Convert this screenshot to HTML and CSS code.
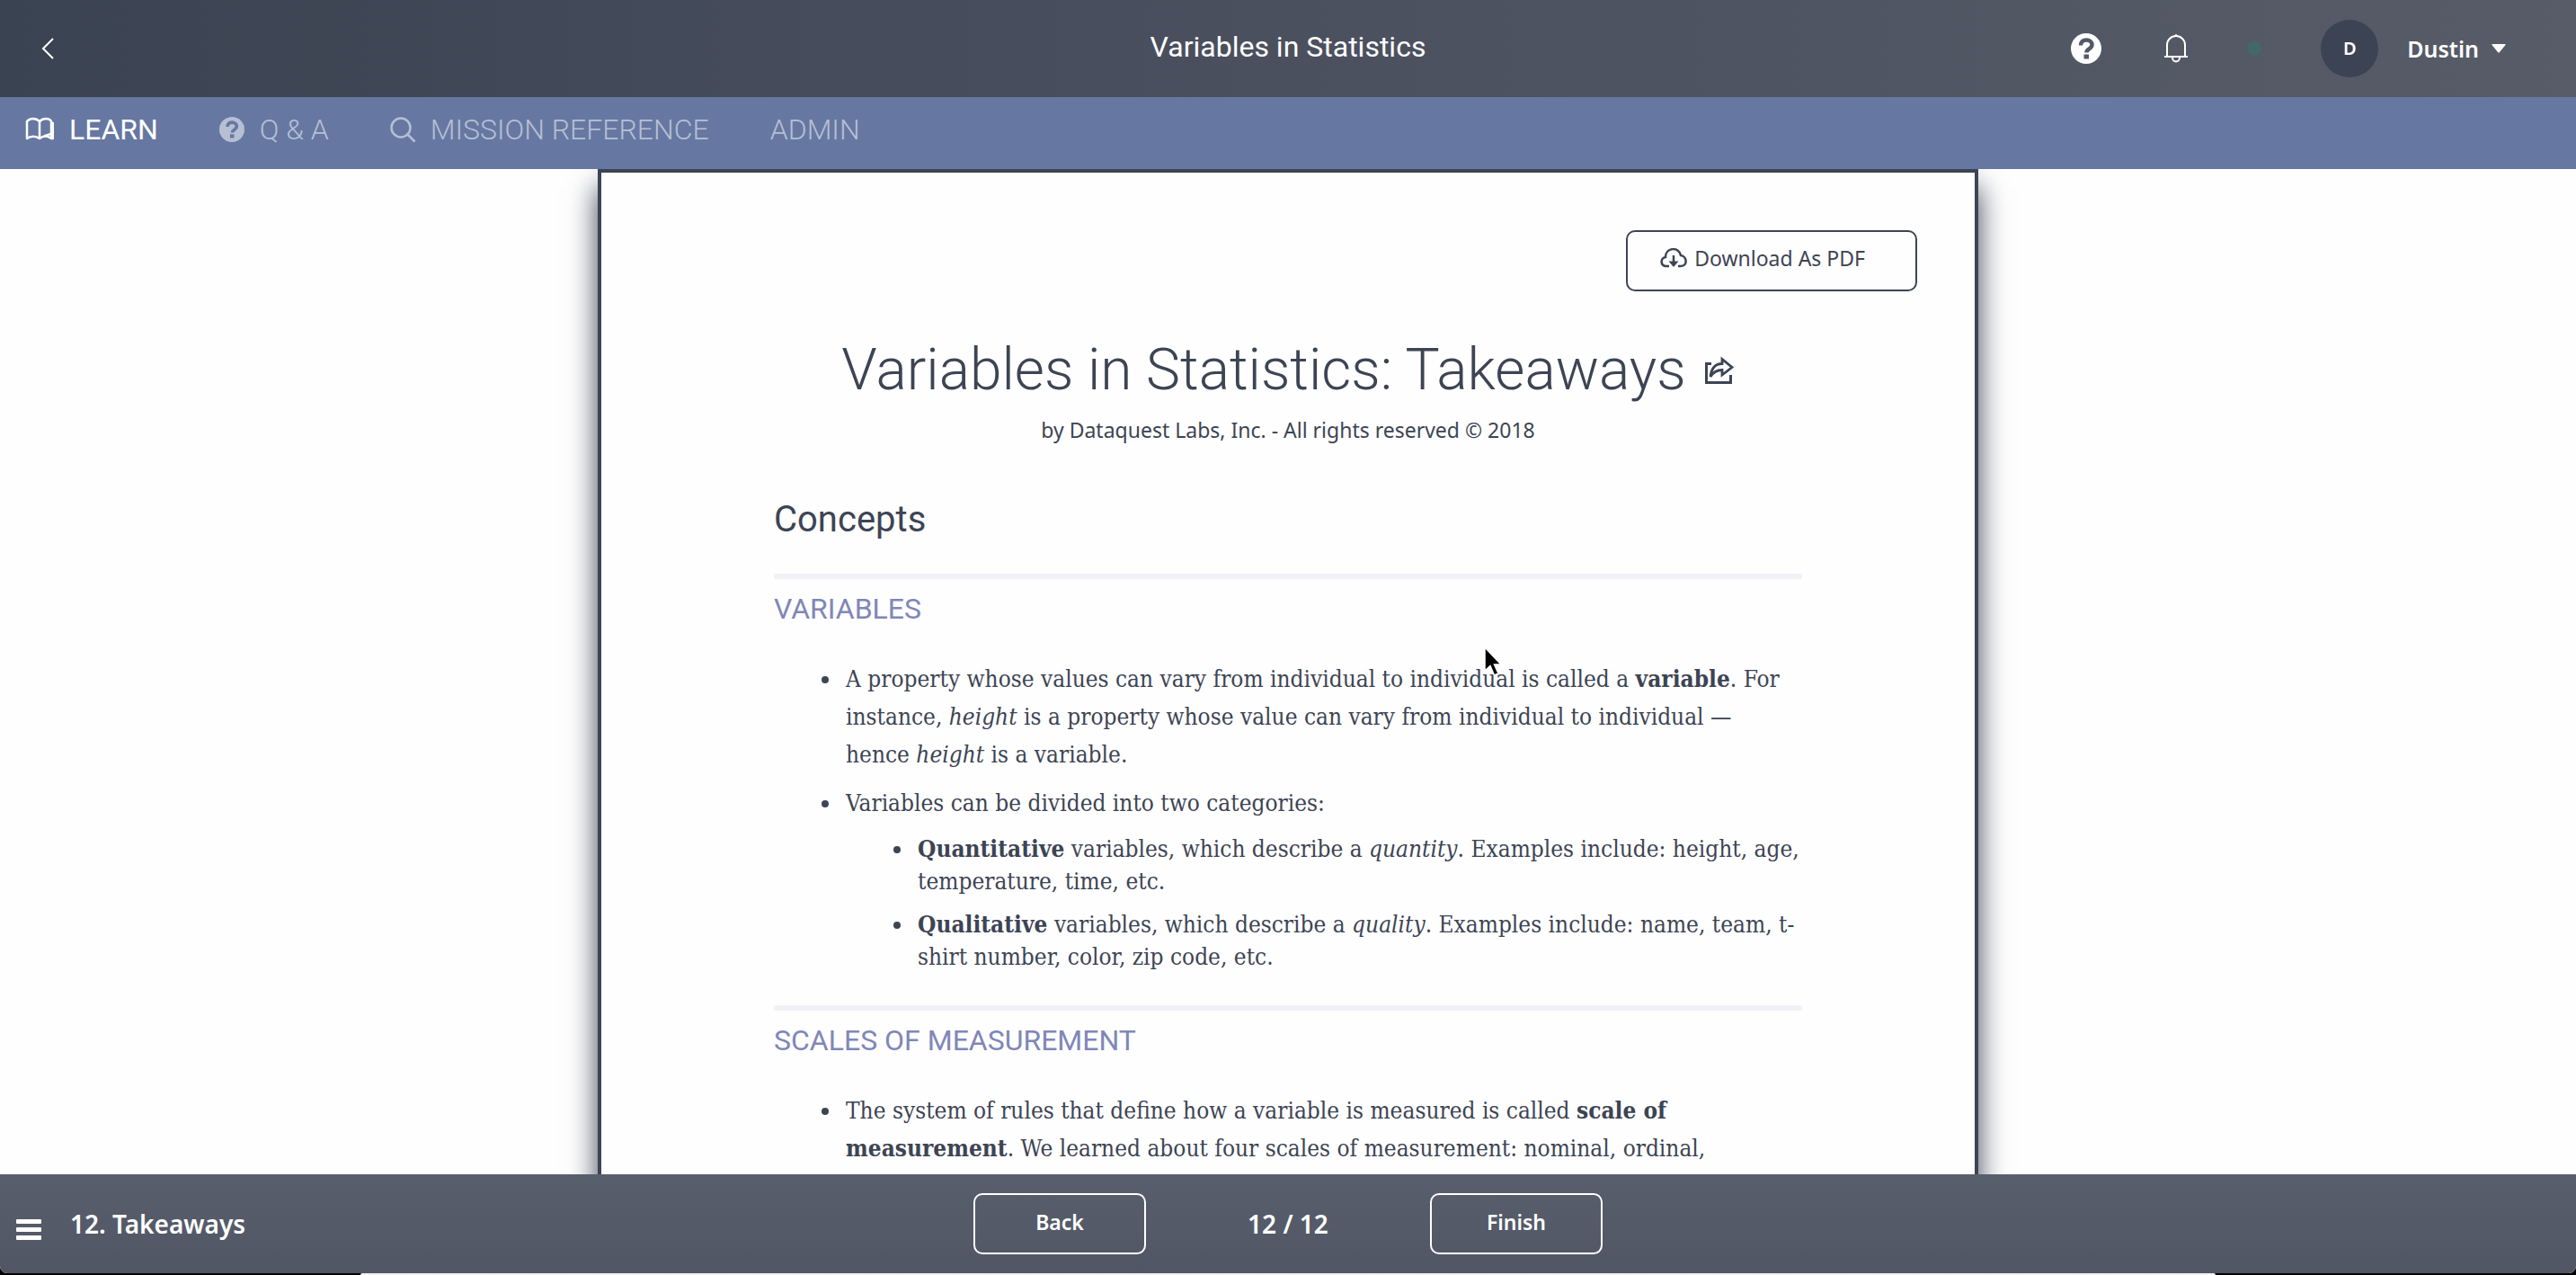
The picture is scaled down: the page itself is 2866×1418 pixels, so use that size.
FILE: index.html
```html
<!DOCTYPE html>
<html lang="en">
<head>
    <meta charset="UTF-8">
    <meta name="viewport" content="width=device-width, initial-scale=1.0">
    <title>Variables in Statistics</title>
    <link rel="stylesheet" href="styles.css">
</head>
<body>

    <div class="app">
        <header class="topbar">
            <button class="icon-btn back-link" aria-label="Go back">
                <svg width="14" height="24" viewBox="0 0 14 24" fill="none" stroke="currentColor" stroke-width="2"><path d="M13 1L2 12l11 11"/></svg>
            </button>
            <h1 class="topbar-title">Variables in Statistics</h1>
            <div class="topbar-tools">
                <button class="icon-btn" aria-label="Help">
                    <svg width="34" height="34" viewBox="0 0 34 34"><circle cx="17" cy="17" r="17" fill="currentColor"/><path d="M11 13.500c0-4 2.700-6 6.200-6 3.600 0 6.300 2 6.300 5.300 0 4.700-6.100 4.200-6.100 8.600" fill="none" stroke="#535966" stroke-width="4.500"/><rect x="14.500" y="23.500" width="5.500" height="5" fill="#535966"/></svg>
                </button>
                <button class="icon-btn bell" aria-label="Notifications">
                    <svg width="26" height="32" viewBox="0 0 26 32" fill="none" stroke="currentColor" stroke-width="2"><path d="M3 25V12a10 10 0 0 1 20 0v13M0 25h26M9 26c0 6 8 6 8 0"/><circle cx="13" cy="1.500" r="1" fill="currentColor" stroke-width="1"/></svg>
                </button>
                <span class="status-dot"></span>
                <span class="avatar">D</span>
                <button class="user-menu">Dustin
                    <svg width="16" height="10" viewBox="0 0 16 10"><path d="M1 0h14q1 0 .5 1L9 9q-1 1-2 0L.5 1Q0 0 1 0z" fill="currentColor"/></svg>
                </button>
            </div>
        </header>

        <nav class="tabs">
            <a href="#learn" class="tab active">
                <svg width="32" height="28" viewBox="0 0 32 28" fill="none" stroke="currentColor" stroke-width="2.500" stroke-linejoin="round"><path d="M16 5C12 1 5 1 2 5v19c4-3 10-3 14 0 4-3 9-3 13 0V5C27 1 20 1 16 5v19M20 22c3-2 6-2 8-3M29 6l2 1v17h-2"/></svg>
                LEARN
            </a>
            <a href="#qa" class="tab">
                <svg width="28" height="28" viewBox="0 0 34 34"><circle cx="17" cy="17" r="17" fill="currentColor"/><path d="M11 13.500c0-4 2.700-6 6.200-6 3.600 0 6.300 2 6.300 5.300 0 4.700-6.100 4.200-6.100 8.600" fill="none" stroke="#6678a2" stroke-width="4.500"/><rect x="14.500" y="23.500" width="5.500" height="5" fill="#6678a2"/></svg>
                Q &amp; A
            </a>
            <a href="#reference" class="tab">
                <svg width="28" height="28" viewBox="0 0 28 28" fill="none" stroke="currentColor" stroke-width="2.500" stroke-linecap="round"><circle cx="12" cy="12" r="10.500"/><path d="M19.500 19.500L27 27"/></svg>
                MISSION REFERENCE
            </a>
            <a href="#admin" class="tab">ADMIN</a>
        </nav>

        <main class="content">
            <article class="sheet">
                <button class="download">
                    <svg width="30" height="22" viewBox="0 0 30 22" fill="none" stroke="currentColor" stroke-width="2.500"><path d="M10 20H7C0 20 0 11 6 10 6-1 21-2 23 8c7 1 8 12 0 12h-3M15 8v10"/><path d="M9.500 14.500h11L15 21z" fill="currentColor" stroke="none"/></svg>
                    Download As PDF
                </button>

                <h2 class="sheet-title">
                    Variables in Statistics: Takeaways
                    <a href="#share" aria-label="Share"><svg width="34" height="32" viewBox="0 0 34 32" fill="none" stroke="currentColor" stroke-width="3"><path d="M8 8.500H2.500v21h27V21"/><path d="M7 23C8 14 12 8.500 20 8.500V3.500L31 12.500 20 21v-5.500C14 15.500 10 18 7 23z" stroke-width="2.800"/></svg></a>
                </h2>
                <p class="byline">by Dataquest Labs, Inc. - All rights reserved © 2018</p>

                <h3 class="section-title">Concepts</h3>

                <section class="topic">
                    <h4>VARIABLES</h4>
                    <ul>
                        <li>A property whose values can vary from individual to individual is called a <strong>variable</strong>. For instance, <em>height</em> is a property whose value can vary from individual to individual —<br>hence <em>height</em> is a variable.</li>
                        <li>Variables can be divided into two categories:
                            <ul>
                                <li><strong>Quantitative</strong> variables, which describe a <em>quantity</em>. Examples include: height, age, temperature, time, etc.</li>
                                <li><strong>Qualitative</strong> variables, which describe a <em>quality</em>. Examples include: name, team, t-<wbr>shirt number, color, zip code, etc.</li>
                            </ul>
                        </li>
                    </ul>
                </section>

                <section class="topic">
                    <h4>SCALES OF MEASUREMENT</h4>
                    <ul>
                        <li>The system of rules that define how a variable is measured is called <strong>scale of measurement</strong>. We learned about four scales of measurement: nominal, ordinal,</li>
                    </ul>
                </section>
            </article>
        </main>

        <footer class="bottombar">
            <div class="current-screen">
                <button class="icon-btn" aria-label="Open menu">
                    <svg width="28" height="24" viewBox="0 0 28 24" fill="currentColor"><rect width="28" height="5" rx="1"/><rect y="9" width="28" height="5" rx="1"/><rect y="18" width="28" height="5" rx="1"/></svg>
                </button>
                12. Takeaways
            </div>
            <div class="pager">
                <button>Back</button>
                <span>12 / 12</span>
                <button>Finish</button>
            </div>
        </footer>
    </div>

    <div class="dock"></div>

    <svg class="cursor" width="22" height="34" viewBox="0 0 22 34"><path d="M1 1v26l6-5.500 4.500 10.500 4.500-2-4.500-10H19z" fill="#000" stroke="#fff" stroke-width="1.500"/></svg>

</body>
</html>
```
FILE: styles.css
```css
* {
    box-sizing: border-box;
}
body {
    display: flex;
    flex-direction: column;
    height: 100vh;
    margin: 0;
    overflow: hidden;
    background: #000;
    color: #3d4454;
    font-family: "Noto Sans", sans-serif;
}
h1, h2, h3, h4, p, ul {
    margin: 0;
    padding: 0;
    font-weight: normal;
}
a {
    color: inherit;
    text-decoration: none;
}
button {
    padding: 0;
    border: none;
    background: none;
    color: inherit;
    font: inherit;
    cursor: pointer;
}
svg {
    display: block;
}
.app {
    display: flex;
    flex: 1;
    flex-direction: column;
    min-height: 0;
    overflow: hidden;
    border-radius: 0 0 8px 8px;
    background: #fefefe;
}

/* top bar */
.topbar {
    display: grid;
    grid-template-columns: 1fr auto 1fr;
    align-items: center;
    height: 108px;
    flex: none;
    padding: 0 78px 0 46px;
    background: linear-gradient(to right, #3a4351, #4b505f 50%, #575c68);
    color: #fff;
}
.back-link {
    justify-self: start;
}
.topbar-title {
    padding: 0 0 4px 32px;
    font-family: Roboto, sans-serif;
    font-size: 32px;
    line-height: 40px;
}
.topbar-tools {
    display: flex;
    align-items: center;
    justify-content: flex-end;
}
.bell {
    margin: 0 66px 0 70px;
}
.status-dot {
    width: 16px;
    height: 16px;
    border-radius: 50%;
    background: #42686a;
}
.avatar {
    width: 64px;
    height: 64px;
    margin: 0 32px 0 66px;
    border-radius: 50%;
    background: #3c4354;
    font-size: 20px;
    font-weight: 600;
    line-height: 64px;
    text-align: center;
}
.user-menu {
    display: flex;
    align-items: center;
    gap: 14px;
    font-size: 25px;
    font-weight: 600;
}

/* tabs */
.tabs {
    display: flex;
    flex: none;
    gap: 68px;
    height: 80px;
    padding: 0 28px 8px;
    background: #6678a2;
    color: #b6bfd3;
    font-family: Roboto, sans-serif;
    font-size: 32px;
    font-weight: 300;
}
.tab {
    display: flex;
    align-items: center;
    gap: 17px;
}
.tab.active {
    color: #fff;
    font-weight: 400;
}

/* sheet */
.content {
    display: flex;
    flex: 1;
    justify-content: center;
    min-height: 0;
    overflow: hidden;
}
.sheet {
    width: 1536px;
    height: max-content;
    min-height: calc(100% + 40px);
    padding: 64px 192px 0;
    border: 4px solid #3d4454;
    background: #fefefe;
    box-shadow: 0 20px 30px #3d4454;
}
.download {
    display: flex;
    align-items: center;
    gap: 8px;
    height: 68px;
    margin: 0 -128px 0 auto;
    padding: 0 56px 6px 36px;
    border: 2px solid #3d4454;
    border-radius: 10px;
    font-size: 23px;
}
.sheet-title {
    display: flex;
    align-items: center;
    justify-content: center;
    gap: 20px;
    margin: 48px -40px 0;
    font-family: Roboto, sans-serif;
    font-size: 64px;
    font-weight: 300;
    line-height: 80px;
    white-space: nowrap;
}
.byline {
    margin-top: 8px;
    font-size: 23px;
    line-height: 36px;
    text-align: center;
}
.section-title {
    margin: 56px 0 34px;
    font-family: Roboto, sans-serif;
    font-size: 40px;
    line-height: 52px;
}
.topic {
    margin-bottom: 36px;
    border-top: 6px solid #f1f2f8;
    font-family: "DejaVu Serif Condensed", "DejaVu Serif", serif;
    font-size: 26px;
    line-height: 42px;
}
.topic h4 {
    margin: 12px 0 36px;
    color: #8087b8;
    font-family: Roboto, sans-serif;
    font-size: 32px;
    line-height: 42px;
}
.topic ul {
    padding-left: 76px;
    list-style: disc;
}
.topic li {
    margin-bottom: 12px;
    padding-left: 4px;
}
.topic ul ul {
    margin-top: 12px;
    line-height: 36px;
}

/* bottom bar */
.bottombar {
    display: grid;
    grid-template-columns: 1fr 700px 1fr;
    flex: none;
    align-items: center;
    height: 110px;
    padding: 0 18px;
    background: linear-gradient(#585f6c, #515665);
    color: #fff;
    font-size: 28px;
    font-weight: 600;
}
.current-screen {
    display: flex;
    align-items: flex-end;
    gap: 32px;
}
.pager {
    display: flex;
    align-items: center;
    justify-content: space-between;
}
.pager button {
    width: 192px;
    height: 68px;
    padding-bottom: 4px;
    border: 2px solid #fff;
    border-radius: 10px;
    font-size: 23px;
}

/* edge of the window behind */
.dock {
    flex: none;
    height: 2px;
    margin: 0 14%;
    border-radius: 4px 4px 0 0;
    background: #f0f0f0;
}
.cursor {
    position: absolute;
    top: 719px;
    left: 1651px;
}
```
